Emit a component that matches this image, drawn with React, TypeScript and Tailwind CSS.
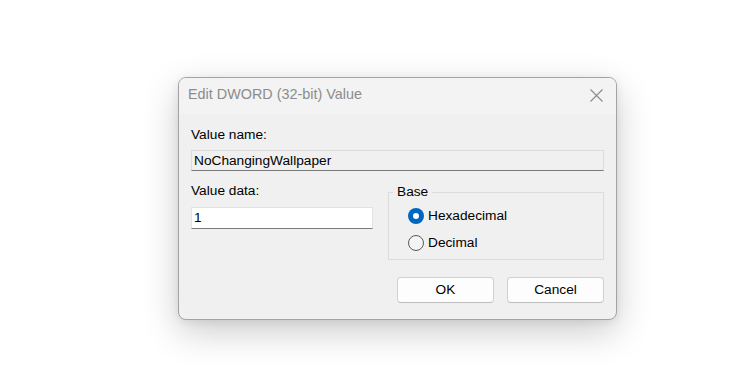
import { useState } from "react";

function Radio({ label, checked, onSelect }: { label: string; checked: boolean; onSelect: () => void }) {
  return (
    <button type="button" onClick={onSelect} className="flex h-[16px] items-center gap-[4px] text-left">
      {checked ? (
        <span className="flex h-[16px] w-[16px] items-center justify-center rounded-full bg-[#0067c0]">
          <span className="h-[6px] w-[6px] rounded-full bg-white" />
        </span>
      ) : (
        <span className="h-[16px] w-[16px] rounded-full border border-[#5a5a5a] bg-[#f4f4f4]" />
      )}
      <span className="leading-[16px]">{label}</span>
    </button>
  );
}

export default function App() {
  const [base, setBase] = useState<"hex" | "dec">("hex");

  return (
    <div
      className="h-[386px] w-[730px] bg-white pl-[178px] pt-[77px] text-[13.7px] text-black"
      style={{ fontFamily: '"Liberation Sans", Arial, sans-serif' }}
    >
      <div className="w-[439px] overflow-hidden rounded-[8px] border border-[#a3a3a3] bg-[#f0f0f0] shadow-[0_12px_36px_rgba(0,0,0,0.2),0_2px_8px_rgba(0,0,0,0.08)]">
        {/* title bar */}
        <div className="flex h-[36px] items-start justify-between bg-[#f3f3f3] pl-[9px] pr-[13px]">
          <span className="pt-[7px] text-[14.4px] leading-[18px] text-[#8c8c8c]">Edit DWORD (32-bit) Value</span>
          <svg className="mt-[11px]" width="13" height="13" viewBox="0 0 13 13" fill="none">
            <path d="M0.5 0.5L12.5 12.5M12.5 0.5L0.5 12.5" stroke="#8a8a8a" strokeWidth="1.1" />
          </svg>
        </div>

        {/* body */}
        <div className="px-[12px] pb-[16px] pt-[13px] leading-[16px]">
          <div>Value name:</div>
          <div className="mt-[7px] flex h-[21px] items-center border border-[#dcdcdc] border-b-[#7a7a7a] bg-[#f0f0f0] pl-[2px]">
            NoChangingWallpaper
          </div>

          <div className="mt-[12px] flex items-start gap-[15px]">
            <div className="w-[182px]">
              <div>Value data:</div>
              <div className="mt-[8px] flex h-[22px] items-center border border-[#e3e3e3] border-b-[#7a7a7a] bg-white pl-[2px]">
                1
              </div>
            </div>
            <fieldset className="mt-px flex-1 border border-[#dcdcdc] pb-[8px] pl-[19px] pt-[8px]">
              <legend className="-ml-[15px] px-[4px] leading-[16px]">Base</legend>
              <div className="flex flex-col gap-[11px]">
                <Radio label="Hexadecimal" checked={base === "hex"} onSelect={() => setBase("hex")} />
                <Radio label="Decimal" checked={base === "dec"} onSelect={() => setBase("dec")} />
              </div>
            </fieldset>
          </div>

          <div className="mt-[17px] flex justify-end gap-[13px]">
            <button type="button" className="h-[26px] w-[97px] rounded-[4px] border border-[#d0d0d0] border-b-[#bdbdbd] bg-[#fdfdfd]">
              OK
            </button>
            <button type="button" className="h-[26px] w-[97px] rounded-[4px] border border-[#d0d0d0] border-b-[#bdbdbd] bg-[#fdfdfd]">
              Cancel
            </button>
          </div>
        </div>
      </div>
    </div>
  );
}
